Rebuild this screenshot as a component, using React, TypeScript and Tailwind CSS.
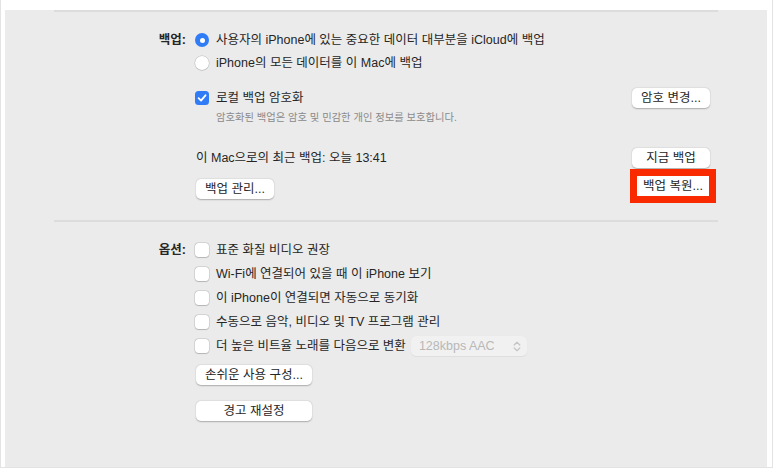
import React from "react";

const FONT = '"Liberation Sans", "Noto Sans CJK KR", sans-serif';

function Btn({ children, w }: { children: React.ReactNode; w: string }) {
  return (
    <div
      className={`${w} h-[20px] bg-white rounded-[5px] flex items-center justify-center text-[12.5px] text-[#262626] shadow-[0_0.5px_1.5px_rgba(0,0,0,0.28)]`}
    >
      {children}
    </div>
  );
}

function Check({ checked }: { checked?: boolean }) {
  if (checked) {
    return (
      <div className="w-[14px] h-[14px] rounded-[3.5px] bg-[#2f7cf6] flex items-center justify-center shrink-0">
        <svg width="10" height="10" viewBox="0 0 10 10">
          <path d="M1.6 5.2 L4 7.6 L8.5 2.3" fill="none" stroke="white" strokeWidth="1.8" strokeLinecap="round" strokeLinejoin="round" />
        </svg>
      </div>
    );
  }
  return (
    <div className="w-[14px] h-[14px] rounded-[3.5px] bg-white shrink-0 shadow-[0_0_0_0.5px_rgba(0,0,0,0.18),0_0.5px_1px_rgba(0,0,0,0.15)]" />
  );
}

function Radio({ on }: { on?: boolean }) {
  if (on) {
    return (
      <div className="w-[14px] h-[14px] rounded-full bg-[#2f7cf6] flex items-center justify-center shrink-0">
        <div className="w-[5px] h-[5px] rounded-full bg-white" />
      </div>
    );
  }
  return (
    <div className="w-[14px] h-[14px] rounded-full bg-white shrink-0 shadow-[0_0_0_0.5px_rgba(0,0,0,0.18),0_0.5px_1px_rgba(0,0,0,0.15)]" />
  );
}

function Row({ label, children, className = "" }: { label?: string; children: React.ReactNode; className?: string }) {
  return (
    <div className={`flex items-center h-[20px] ${className}`}>
      <div className="w-[132px] text-right text-[12.5px] font-bold text-[#262626] shrink-0">{label}</div>
      <div className="ml-[9px] flex items-center flex-1">{children}</div>
    </div>
  );
}

export default function App() {
  return (
    <div
      className="w-[773px] h-[468px] bg-white border-x border-b border-[#e3e3e3] pl-[4px] pt-[5px]"
      style={{ fontFamily: FONT }}
    >
      <div className="w-[762px] h-[457px] bg-[#ebebeb] px-[49px] text-[12.5px] text-[#262626]">
        <div className="mt-[5px] h-[2px] bg-[#dcdcdc]" />

        <Row label="백업:" className="mt-[18px]">
          <Radio on />
          <span className="ml-[7px]">사용자의 iPhone에 있는 중요한 데이터 대부분을 iCloud에 백업</span>
        </Row>
        <Row className="mt-[3px]">
          <Radio />
          <span className="ml-[7px]">iPhone의 모든 데이터를 이 Mac에 백업</span>
        </Row>

        <Row className="mt-[15px]">
          <Check checked />
          <span className="ml-[7px]">로컬 백업 암호화</span>
          <div className="ml-auto mr-[8px]">
            <Btn w="w-[78px]">암호 변경...</Btn>
          </div>
        </Row>
        <div className="mt-[3px] h-[14px] flex items-center pl-[162px] text-[10.3px] text-[#8a8a8a]">
          암호화된 백업은 암호 및 민감한 개인 정보를 보호합니다.
        </div>

        <div className="mt-[23px] flex items-center h-[20px] pl-[142px]">
          <span>이 Mac으로의 최근 백업: 오늘 13:41</span>
          <div className="ml-auto mr-[8px]">
            <Btn w="w-[78px]">지금 백업</Btn>
          </div>
        </div>

        <div className="mt-[1px] flex items-start h-[36px] pl-[142px]">
          <div className="mt-[10px]">
            <Btn w="w-[78px]">백업 관리...</Btn>
          </div>
          <div className="ml-auto mr-[2px] border-[7px] border-[#fa2a00] bg-[#fa2a00]">
            <div className="w-[72px] h-[20px] bg-white flex items-center justify-center text-[12.5px]">
              백업 복원...
            </div>
          </div>
        </div>

        <div className="mt-[15px] h-[2px] bg-[#dcdcdc]" />

        <div className="mt-[18px] flex flex-col gap-[4px]">
          <Row label="옵션:">
            <Check />
            <span className="ml-[7px]">표준 화질 비디오 권장</span>
          </Row>
          <Row>
            <Check />
            <span className="ml-[7px]">Wi-Fi에 연결되어 있을 때 이 iPhone 보기</span>
          </Row>
          <Row>
            <Check />
            <span className="ml-[7px]">이 iPhone이 연결되면 자동으로 동기화</span>
          </Row>
          <Row>
            <Check />
            <span className="ml-[7px]">수동으로 음악, 비디오 및 TV 프로그램 관리</span>
          </Row>
          <Row>
            <Check />
            <span className="ml-[7px]">더 높은 비트율 노래를 다음으로 변환</span>
            <div className="ml-[5px] w-[116px] h-[20px] rounded-[5px] bg-[#f1f1f1] flex items-center pl-[8px] pr-[6px] text-[#b8b8b8] shadow-[0_0.5px_1px_rgba(0,0,0,0.06)]">
              <span>128kbps AAC</span>
              <svg className="ml-auto" width="8" height="11" viewBox="0 0 8 11">
                <path d="M1.2 4 L4 1.3 L6.8 4 M1.2 7 L4 9.7 L6.8 7" fill="none" stroke="#c4c4c4" strokeWidth="1.2" strokeLinecap="round" strokeLinejoin="round" />
              </svg>
            </div>
          </Row>
        </div>

        <div className="mt-[9px] pl-[142px]">
          <Btn w="w-[116px]">손쉬운 사용 구성...</Btn>
        </div>
        <div className="mt-[16px] pl-[142px]">
          <Btn w="w-[116px]">경고 재설정</Btn>
        </div>
      </div>
    </div>
  );
}
